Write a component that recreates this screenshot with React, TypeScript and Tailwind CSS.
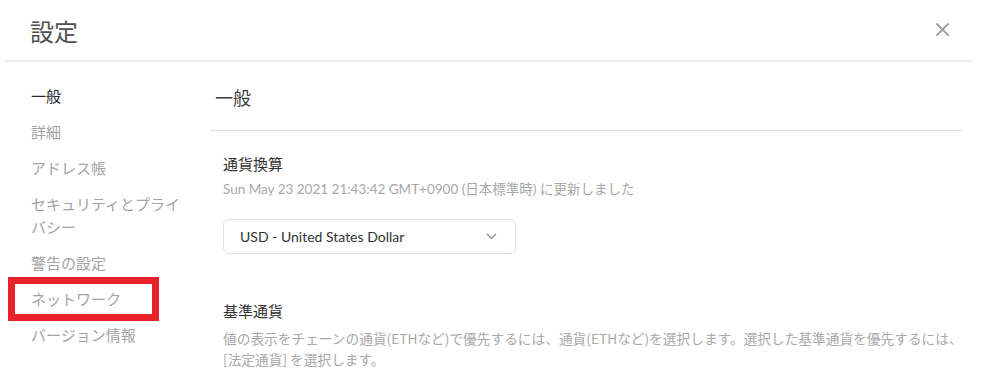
import React from "react";

const jp = { fontFamily: '"Noto Sans CJK JP", "Noto Sans", sans-serif' };
const lat = { fontFamily: 'Lato, "Noto Sans CJK JP", sans-serif' };

const navItems = [
  "一般",
  "詳細",
  "アドレス帳",
  "セキュリティとプライバシー",
  "警告の設定",
  "ネットワーク",
  "バージョン情報",
];

export default function App() {
  return (
    <div className="w-[985px] h-[383px] bg-white overflow-hidden" style={jp}>
      <div className="h-[60px] flex items-center justify-between pl-[30px] pr-[35px]">
        <div className="text-[24px] leading-[30px] text-[#505050] pt-[2px]">設定</div>
        <svg width="15" height="15" viewBox="0 0 15 15" className="mt-[-2px]">
          <path d="M2 2 L13 13 M13 2 L2 13" stroke="#a0a0a0" strokeWidth="1.8" strokeLinecap="round" />
        </svg>
      </div>
      <div className="h-[2px] bg-[#ececec] ml-[5px] mr-[13px]" />
      <div className="flex">
        <div className="w-[210px] shrink-0 pl-[31px] pt-[22px]">
          <div className="w-[160px] flex flex-col gap-[13px]">
            {navItems.map((t, i) => (
              <div
                key={t}
                className={
                  "relative text-[15px] leading-[23px] " +
                  (i === 0 ? "text-[#24272a]" : "text-[#a3a3a3]")
                }
              >
                {t}
                {i === 5 && (
                  <div className="absolute left-[-23px] top-[-10px] w-[151px] h-[44px] border-[7px] border-[#e8212b]" />
                )}
              </div>
            ))}
          </div>
        </div>
        <div className="flex-1 pr-[33px]">
          <div className="pl-[5px] pt-[23px] pb-[21px] border-b border-[#e3e3e3] text-[18px] leading-[24px] text-[#3a3a3a]">
            一般
          </div>
          <div className="pl-[13px]">
            <div className="mt-[22px] text-[15px] leading-[22px] text-[#333]">通貨換算</div>
            <div className="mt-[4px] text-[13.5px] leading-[20px] text-[#a8a8a8]" style={lat}>
              Sun May 23 2021 21:43:42 GMT+0900 (日本標準時) に更新しました
            </div>
            <div className="mt-[20px] w-[293px] h-[35px] border border-[#e0e0e0] rounded-[6px] flex items-center justify-between pl-[16px] pr-[18px]">
              <span className="text-[14px] text-[#333]" style={lat}>
                USD - United States Dollar
              </span>
              <svg width="11" height="7" viewBox="0 0 11 7">
                <path d="M1 1 L5.5 5.5 L10 1" stroke="#8a8a8a" strokeWidth="1.2" fill="none" />
              </svg>
            </div>
            <div className="mt-[46px] text-[15px] leading-[22px] text-[#333]">基準通貨</div>
            <div className="mt-[6px] text-[13.7px] leading-[21px] text-[#a8a8a8]">
              <div className="whitespace-nowrap">
                値の表示をチェーンの通貨(ETHなど)で優先するには、通貨(ETHなど)を選択します。選択した基準通貨を優先するには、
              </div>
              <div className="whitespace-nowrap">[法定通貨] を選択します。</div>
            </div>
          </div>
        </div>
      </div>
    </div>
  );
}
